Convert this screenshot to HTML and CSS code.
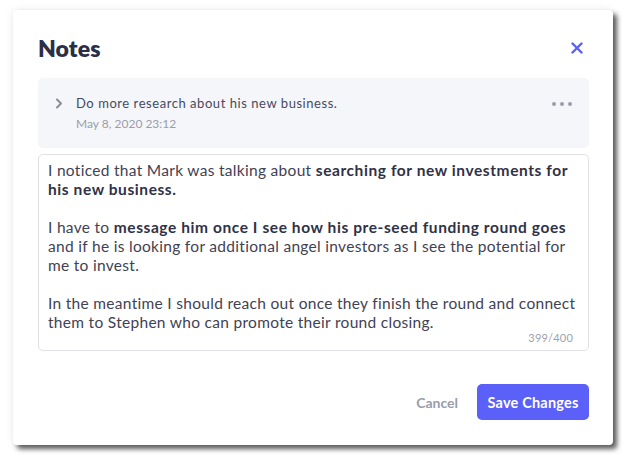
FILE: index.html
```html
<!DOCTYPE html>
<html>
<head>
<meta charset="utf-8">
<link rel="stylesheet" href="styles.css">
</head>
<body>
<div class="modal">
  <div class="header">
    <h1 class="title">Notes</h1>
    <button class="close" aria-label="Close">
      <svg width="12" height="12" viewBox="0 0 12 12"><path d="M1.5 1.5L10.5 10.5M10.5 1.5L1.5 10.5" stroke="#5a5ff5" stroke-width="2.4" stroke-linecap="round"/></svg>
    </button>
  </div>
  <div class="note">
    <svg class="chevron" width="8" height="11" viewBox="0 0 8 11"><path d="M2 1.5L6 5.5L2 9.5" fill="none" stroke="#8a8c99" stroke-width="2" stroke-linecap="round" stroke-linejoin="round"/></svg>
    <div class="note-body">
      <div class="note-title">Do more research about his new business.</div>
      <div class="note-date">May 8, 2020 23:12</div>
    </div>
    <div class="dots"><span></span><span></span><span></span></div>
  </div>
  <div class="editor">
    <div class="editor-text">
      <p>I noticed that Mark was talking about <b>searching for new investments for his new business.</b></p>
      <p>I have to <b>message him once I see how his pre-seed funding round goes</b> and if he is looking for additional angel investors as I see the potential for me to invest.</p>
      <p>In the meantime I should reach out once they finish the round and connect them to Stephen who can promote their round closing.</p>
    </div>
    <div class="count">399/400</div>
  </div>
  <div class="footer">
    <button class="cancel">Cancel</button>
    <button class="save">Save Changes</button>
  </div>
</div>
</body>
</html>
```
FILE: styles.css
```css
* { box-sizing: border-box; }
html, body { margin: 0; padding: 0; background: #ffffff; }
body {
  font-family: "Lato", "Open Sans", sans-serif;
  padding: 10px 15px 13px 13px;
}
.modal {
  width: 600px;
  height: 435px;
  background: #fff;
  border-radius: 4px;
  box-shadow: 4px 4px 5px rgba(40, 40, 40, 0.75), 0 0 10px rgba(0, 0, 0, 0.08);
  padding: 24px 24px 25px 25px;
  display: flex;
  flex-direction: column;
}
.header {
  display: flex;
  align-items: center;
  justify-content: space-between;
  height: 28px;
  margin-bottom: 16px;
}
.title {
  margin: 0;
  font-size: 23px;
  font-weight: 800;
  color: #2b2e45;
  letter-spacing: 0.1px;
}
.close {
  background: none;
  border: 0;
  padding: 0;
  margin-right: 6px;
  display: flex;
  cursor: pointer;
}
.note {
  background: #f5f6fa;
  border-radius: 5px;
  height: 70px;
  padding: 16px 17px 0 17px;
  display: flex;
  align-items: flex-start;
  gap: 13px;
}
.chevron { margin-top: 4px; flex: none; }
.note-body { flex: 1; }
.note-title {
  font-size: 13px;
  color: #464a5c;
  line-height: 19px;
  letter-spacing: 0.55px;
}
.note-date {
  font-size: 12px;
  color: #9b9dab;
  margin-top: 3px;
  line-height: 16px;
}
.dots {
  display: flex;
  gap: 4px;
  margin-top: 8px;
}
.dots span {
  width: 4px;
  height: 4px;
  border-radius: 50%;
  background: #9a9caa;
}
.editor {
  margin-top: 6px;
  height: 197px;
  border: 1.5px solid #dfe0e8;
  border-radius: 5px;
  padding: 6px 12px 0 9px;
  display: flex;
  flex-direction: column;
}
.editor-text {
  font-size: 15.5px;
  line-height: 19px;
  letter-spacing: 0.3px;
  color: #3f4254;
}
.editor-text p { margin: 0 0 19px 0; }
.editor-text p:last-child { margin-bottom: 0; }
.editor-text b { font-weight: 700; color: #2f3246; letter-spacing: 0.58px; }
.count {
  align-self: flex-end;
  margin-right: 3px;
  font-size: 11px;
  line-height: 12px;
  letter-spacing: 0.2px;
  color: #a0a2ae;
}
.footer {
  margin-top: auto;
  display: flex;
  justify-content: flex-end;
  align-items: center;
  gap: 19px;
}
.cancel {
  background: none;
  border: 0;
  font-family: inherit;
  font-size: 14px;
  font-weight: 700;
  color: #9a9cab;
  padding: 0;
}
.save {
  background: #5a60f8;
  color: #fff;
  border: 0;
  border-radius: 5px;
  font-family: inherit;
  font-size: 14.5px;
  font-weight: 700;
  letter-spacing: 0.2px;
  width: 112px;
  height: 36px;
  padding: 0;
}
```
